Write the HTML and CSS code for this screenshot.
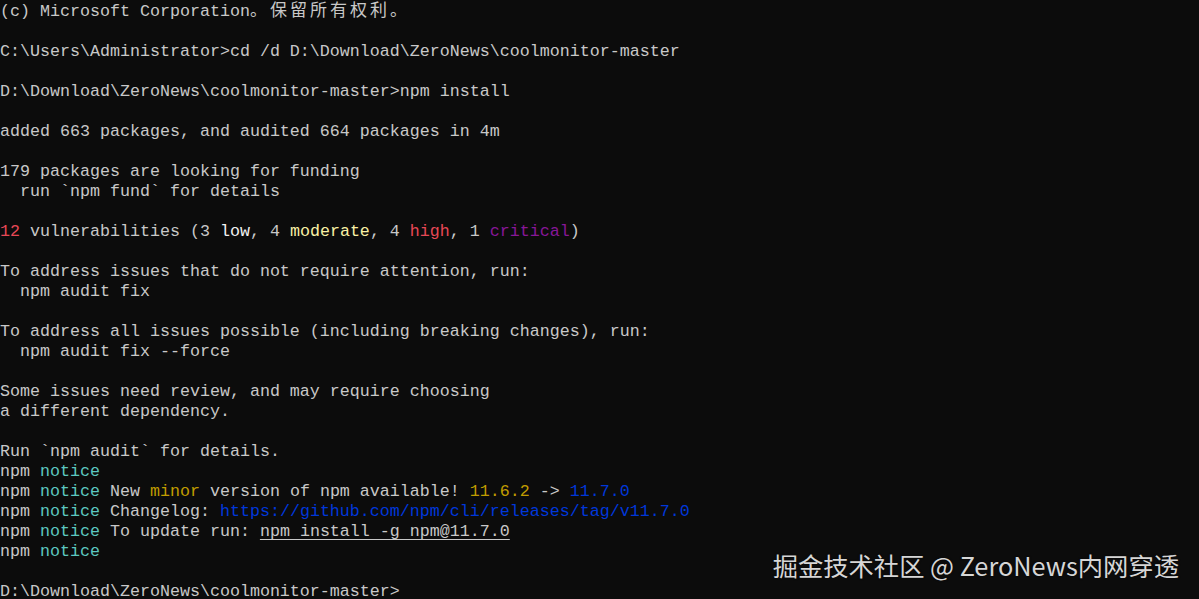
FILE: index.html
```html
<!DOCTYPE html>
<html lang="zh-CN">
<head>
<meta charset="utf-8">
<title>Command Prompt</title>
<link rel="stylesheet" href="styles.css">
</head>
<body>
<main class="terminal">
<pre class="output">(c) Microsoft Corporation<span class="cjk">。保留所有权利。</span>

C:\Users\Administrator&gt;cd /d D:\Download\ZeroNews\coolmonitor-master

D:\Download\ZeroNews\coolmonitor-master&gt;npm install

added 663 packages, and audited 664 packages in 4m

179 packages are looking for funding
  run `npm fund` for details

<span class="red">12</span> vulnerabilities (3 <span class="bright">low</span>, 4 <span class="lyellow">moderate</span>, 4 <span class="red">high</span>, 1 <span class="magenta">critical</span>)

To address issues that do not require attention, run:
  npm audit fix

To address all issues possible (including breaking changes), run:
  npm audit fix --force

Some issues need review, and may require choosing
a different dependency.

Run `npm audit` for details.
npm <span class="cyan">notice</span>
npm <span class="cyan">notice</span> New <span class="yellow">minor</span> version of npm available! <span class="yellow">11.6.2</span> -&gt; <span class="blue">11.7.0</span>
npm <span class="cyan">notice</span> Changelog: <span class="blue">https://github.com/npm/cli/releases/tag/v11.7.0</span>
npm <span class="cyan">notice</span> To update run: <span class="uline">npm install -g npm@11.7.0</span>
npm <span class="cyan">notice</span>

D:\Download\ZeroNews\coolmonitor-master&gt;</pre>
<div class="watermark">掘金技术社区 @ ZeroNews内网穿透</div>
</main>
</body>
</html>
```

FILE: styles.css
```css
html, body {
  margin: 0;
  padding: 0;
  background: #0c0c0c;
  overflow: hidden;
}

.terminal {
  position: relative;
  width: 1199px;
  height: 599px;
  background: #0c0c0c;
  overflow: hidden;
}

.output {
  margin: -1px 0 0 0;
  padding: 0;
  font-family: "Liberation Mono", "DejaVu Sans Mono", "Noto Sans CJK SC", monospace;
  font-size: 16.67px;
  line-height: 20px;
  color: #c8c8c8;
  white-space: pre;
}

.cjk {
  font-family: "Noto Sans CJK SC", sans-serif;
  font-size: 17px;
  letter-spacing: 3px;
}

.red { color: #e74856; }
.bright { color: #f2f2f2; }
.lyellow { color: #f9f1a5; }
.magenta { color: #881798; }
.cyan { color: #5cc8c0; }
.yellow { color: #c19c00; }
.blue { color: #0037da; }
.uline {
  text-decoration: underline;
  text-underline-offset: 3px;
}

.watermark {
  position: absolute;
  right: 20px;
  bottom: 19px;
  font-family: "Noto Sans CJK SC", "Noto Sans", sans-serif;
  font-size: 25.3px;
  line-height: 30px;
  color: #d6d6d6;
  text-shadow: 0 0 2px rgba(0, 0, 0, 0.6);
}
```
